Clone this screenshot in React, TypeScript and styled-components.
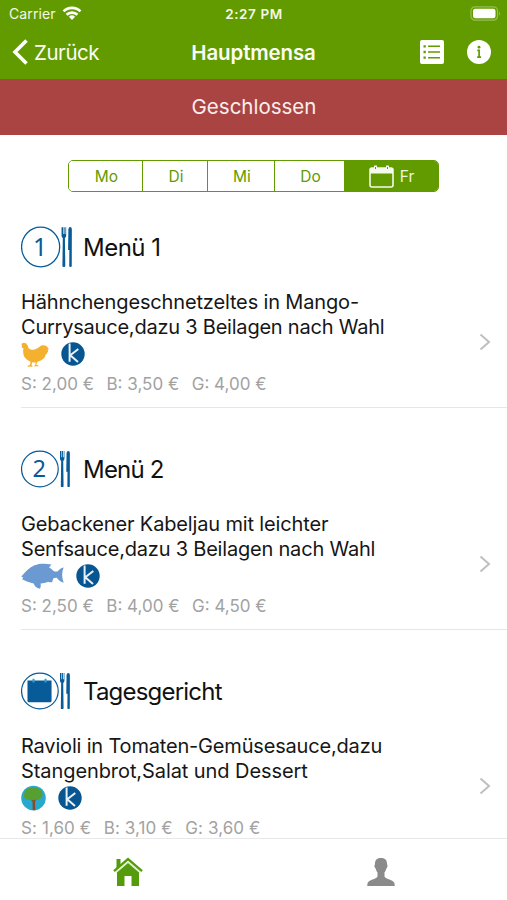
import React from "react";
import styled, { createGlobalStyle } from "styled-components";

const GREEN = "#629b00";
const BLUE = "#075b98";

const GlobalStyle = createGlobalStyle`
  * { box-sizing: border-box; }
  body { margin: 0; background: #fff; font-family: Inter, "Liberation Sans", sans-serif; }
`;

const Screen = styled.div`
  width: 507px;
  height: 900px;
  display: flex;
  flex-direction: column;
  overflow: hidden;
  background: #fff;
  color: #161616;
`;

const StatusBar = styled.div`
  height: 26px;
  flex: none;
  display: grid;
  grid-template-columns: 1fr auto 1fr;
  align-items: center;
  padding: 0 6px 0 9px;
  background: ${GREEN};
  color: #f3f8e8;
`;

const Carrier = styled.div`
  display: flex;
  align-items: center;
  gap: 6px;
  font-size: 14px;
  letter-spacing: 0.1px;
`;

const Clock = styled.div`
  margin-right: 2px;
  padding-top: 1px;
  font-size: 13.5px;
  font-weight: 600;
  letter-spacing: 0.6px;
`;

const Battery = styled.div`
  display: flex;
  justify-content: flex-end;
`;

const NavBar = styled.div`
  height: 53px;
  flex: none;
  display: grid;
  grid-template-columns: 1fr auto 1fr;
  align-items: center;
  padding: 0 15px 1px 12px;
  background: ${GREEN};
  color: #fbfdf5;
`;

const Back = styled.div`
  display: flex;
  align-items: center;
  gap: 6px;
  font-size: 20.5px;
  letter-spacing: -0.45px;
`;

const NavTitle = styled.div`
  font-size: 20.5px;
  font-weight: 600;
  letter-spacing: -0.15px;
  padding-top: 1px;
  margin-left: 3px;
`;

const NavActions = styled.div`
  display: flex;
  justify-content: flex-end;
  gap: 21px;
`;

const Banner = styled.div`
  height: 56px;
  flex: none;
  display: flex;
  align-items: center;
  justify-content: center;
  padding: 0 0 2px 1px;
  background: #a94442;
  color: #faeeee;
  font-size: 20.5px;
`;

const DayPicker = styled.div`
  height: 32px;
  flex: none;
  display: grid;
  grid-template-columns: 73px 65px 67px 70px 94px;
  margin: 25px 68px 20px;
  border: 1px solid ${GREEN};
  border-radius: 5px;
  overflow: hidden;
`;

const Day = styled.div<{ $active?: boolean }>`
  display: flex;
  align-items: center;
  justify-content: center;
  gap: 6px;
  font-size: 15.5px;
  padding-left: ${(p) => (p.$active ? 0 : 2)}px;
  border-left: 1px solid ${GREEN};
  color: ${(p) => (p.$active ? "#eef6df" : GREEN)};
  background: ${(p) => (p.$active ? GREEN : "#fff")};
  &:first-child { border-left: 0; }
`;

const List = styled.div`
  flex: 1;
  min-height: 0;
  overflow: hidden;
  display: flex;
  flex-direction: column;
  gap: 26px;
`;

const Section = styled.section`
  flex: none;
  height: 196px;
  padding-left: 21px;
`;

const SectionTitle = styled.div<{ $spacing: number }>`
  height: 70px;
  display: flex;
  align-items: center;
  gap: 10px;
  font-size: 24px;
  letter-spacing: ${(p) => p.$spacing}px;
  color: #111;
`;

const IconSlot = styled.div`
  width: 52px;
  height: 42px;
  display: flex;
  align-items: center;
`;

const Dish = styled.div`
  height: 126px;
  display: flex;
  align-items: center;
  justify-content: space-between;
  padding: 0 16px 0 0;
  border-bottom: 1px solid #e6e6e6;
`;

const DishBody = styled.div`
  height: 100%;
  padding-top: 8px;
`;

const DishText = styled.div<{ $spacing: number }>`
  font-size: 20px;
  line-height: 24.5px;
  letter-spacing: ${(p) => p.$spacing}px;
  white-space: nowrap;
`;

const Tags = styled.div<{ $gap: number }>`
  display: flex;
  align-items: center;
  gap: ${(p) => p.$gap}px;
  height: 30px;
`;

const Prices = styled.div<{ $spacing: number }>`
  display: flex;
  gap: 12.5px;
  margin-top: 4px;
  font-size: 17px;
  letter-spacing: ${(p) => p.$spacing}px;
  line-height: 23px;
  color: #a2a2a2;
`;

const Disclosure = styled.div`
  display: flex;
  padding-bottom: 6px;
`;

const TabBar = styled.div`
  height: 62px;
  flex: none;
  display: grid;
  grid-template-columns: 1fr 1fr;
  align-items: center;
  justify-items: center;
  padding: 4px 0 0 2px;
  border-top: 1px solid #e8e8e8;
  background: #fff;
`;

const Wifi = () => (
  <svg width="20" height="15" viewBox="0 0 20 15" fill="none" stroke="#fff" strokeWidth="2.7">
    <path d="M1.5 5.4a12 12 0 0 1 17 0M4.6 8.8a7.7 7.7 0 0 1 10.8 0" />
    <path d="M10 14l-3.1-3.2a4.5 4.5 0 0 1 6.2 0z" fill="#fff" stroke="none" />
  </svg>
);

const BatteryIcon = () => (
  <svg width="31" height="15" viewBox="0 0 31 15">
    <rect x="1" y=".8" width="26.5" height="13.4" rx="4" fill="none" stroke="#95bd55" strokeWidth="1.2" />
    <rect x="3" y="2.8" width="22.5" height="9.4" rx="2.2" fill="#fff" />
    <path d="M29 5.2q2 2.3 0 4.6z" fill="#95bd55" />
  </svg>
);

const Plate = ({ kind, width, size }: { kind: string; width: number; size: number }) => (
  <svg width={width} height={size} viewBox="0 0 54 42" preserveAspectRatio="none" style={undefined}>
    <circle cx="20.4" cy="21" r="19.8" fill="none" stroke={BLUE} strokeWidth="1.3" />
    {kind === "day" ? (
      <>
        <path d="M7 9.500h26v22.500a1.500 1.500 0 0 1-1.500 1.500h-23A1.500 1.500 0 0 1 7 32z" fill={BLUE} />
        <path d="M13.500 7.500v4M26.500 7.500v4" stroke="#2ba3cf" strokeWidth="2.200" />
      </>
    ) : (
      <text x="19.7" y="30" textAnchor="middle" fontFamily="Noto Sans, sans-serif" fontSize="25.500" letterSpacing="0" fill={BLUE}>
        {kind}
      </text>
    )}
    <path d="M42.1 1.2v8.200c0 1.300.5 2 1.300 2.500L43 40q0 1 1.500 1t1.500-1l-.4-28.100c.8-.5 1.300-1.200 1.300-2.500V1.200h-.8V8h-.8V1.200h-1V8h-.6V1.200z" fill={BLUE} />
    <path d="M49.200 3.200q.3-2.200 1.900-2.200t1.700 2.200l-.1 36.800q0 1-1.300 1t-1.300-1l.1-16h-1.300z" fill={BLUE} />
  </svg>
);

const Chicken = () => (
  <svg width="29" height="25" viewBox="0 0 29 25">
    <path
      fill="#f4b02f"
      d="M.4 2.500 1.500 1 3.400.8l1 .7.8-.4.5 1.500.9.700.8 2.600c1.200 1.500 3.600 2.200 6.200 1.600 2.800-.8 4.600-2.200 5.800-3.400C22 2.300 26.600 3.300 28 7.600l-1.300-.2.4 2.700-1 .3-.4 1.700-1 .3c-.6 3.600-3.700 5.500-6.300 6.700l-1.800.7-1.500 2.800 2.400 1-.2.700h-2.500l-1.300.4-.1-.9.900-.6.3-2.900-2 .1-1.300-.2-.9 2.900 1.200 1-.5.800-1.700-.5-2.700.3-.2-.9 2.400-.7.700-3.400C6.200 18.200 3.600 16.200 2.600 13.200L2.100 9l.3-2.700L.5 5.400 1 4z"
    />
  </svg>
);

const Fish = () => (
  <svg width="43" height="26" viewBox="0 0 43 26">
    <path
      fill="#6b9ad2"
      d="M.3 13.600C4.600 8.500 8.500 4.400 13.500 2.300 18.800.2 24.200.4 30.500 1.400L28 4.600c2.100 1 3.400 2.700 5.500 3.800h3c1.700-1.500 3.300-3.300 6.100-3.800-2 5-1.900 9.800.1 15.100-2.800-.6-5-2.300-7-4.900-1.500-.3-2.300.1-3.500.8l-1 3.400c-1.500.3-2.500.3-4.100-.3-2.500 1-4.900 1.500-7.500 1.700.3 2.200.2 4-.8 5.300-3.200-.4-5.100-2.300-6.100-5.200C7.600 19.500 3.700 17.600 1 16.300l1.400-1.500z"
    />
  </svg>
);

const Tree = () => (
  <svg width="26" height="26" viewBox="0 0 26 26">
    <circle cx="12.500" cy="13" r="12.300" fill="#27a9ce" />
    <path d="m11.800 15-3.300-1.500 3 3.100.2 8.700h2.600l-.4-9 4-4-4.300 2z" fill="#8a4a26" />
    <path d="M3 10.500C3 5 7.500 2.200 12 2.500c5.500-.3 9.800 3.100 9.600 7.500-.1 3-2.600 4.600-5.600 4.500-2.500.9-4.800.7-6.300.2C6 15 3 13.800 3 10.500z" fill="#589f31" />
  </svg>
);

const Badge = () => (
  <svg width="24" height="24" viewBox="0 0 24 24">
    <circle cx="12" cy="12" r="11.700" fill="#075591" />
    <path d="M8.600 1.500v18.200M17.300 7 9.300 13.300 17 20" fill="none" stroke="#e7f1f8" strokeWidth="2" />
  </svg>
);

const Chevron = () => (
  <svg width="12" height="18" viewBox="0 0 12 18" fill="none" stroke="#bfbfbf" strokeWidth="2">
    <path d="M1.500 1.500 10 9l-8.500 7.500" />
  </svg>
);

const dishes = [
  {
    kind: "1", title: "Menü 1", titleSpacing: -0.5, plate: [55, 42],
    lines: [{ text: "Hähnchengeschnetzeltes in Mango-", spacing: -0.15 }, { text: "Currysauce,dazu 3 Beilagen nach Wahl", spacing: -0.22 }],
    icon: <Chicken />, gap: 11, prices: ["S: 2,00 €", "B: 3,50 €", "G: 4,00 €"], priceSpacing: 0,
  },
  {
    kind: "2", title: "Menü 2", titleSpacing: -0.8, plate: [50, 38],
    lines: [{ text: "Gebackener Kabeljau mit leichter", spacing: -0.15 }, { text: "Senfsauce,dazu 3 Beilagen nach Wahl", spacing: -0.2 }],
    icon: <Fish />, gap: 12, prices: ["S: 2,50 €", "B: 4,00 €", "G: 4,50 €"], priceSpacing: 0,
  },
  {
    kind: "day", title: "Tagesgericht", titleSpacing: -0.8, plate: [50, 38],
    lines: [{ text: "Ravioli in Tomaten-Gemüsesauce,dazu", spacing: -0.18 }, { text: "Stangenbrot,Salat und Dessert", spacing: -0.08 }],
    icon: <Tree />, gap: 11, prices: ["S: 1,60 €", "B: 3,10 €", "G: 3,60 €"], priceSpacing: 0.1,
  },
];

export default function App() {
  return (
    <>
      <GlobalStyle />
      <Screen>
        <StatusBar>
          <Carrier>Carrier <Wifi /></Carrier>
          <Clock>2:27 PM</Clock>
          <Battery><BatteryIcon /></Battery>
        </StatusBar>
        <NavBar>
          <Back>
            <svg width="16" height="26" viewBox="0 0 16 26" fill="none" stroke="#fff" strokeWidth="3.600">
              <path d="M14.500 1.500 3 13l11.500 11.500" />
            </svg>
            Zurück
          </Back>
          <NavTitle>Hauptmensa</NavTitle>
          <NavActions>
            <svg width="26" height="26" viewBox="0 0 26 26">
              <rect x="1" y="1" width="24" height="24" rx="2" fill="#fff" />
              <path d="M9 7.300h12M9 13h12M9 18.700h12" stroke={GREEN} strokeWidth="1.500" />
              <path d="M4.500 7.300h2.300M4.500 13h2.300M4.500 18.700h2.300" stroke={GREEN} strokeWidth="2.300" />
            </svg>
            <svg width="26" height="26" viewBox="0 0 26 26">
              <circle cx="13" cy="13" r="12" fill="#fff" />
              <circle cx="13" cy="8.200" r="1.400" fill={GREEN} />
              <path d="M11.300 11.300h1.800v6.400M11.200 18.100h3.900" stroke={GREEN} strokeWidth="1.700" fill="none" />
            </svg>
          </NavActions>
        </NavBar>
        <Banner>Geschlossen</Banner>
        <DayPicker>
          <Day>Mo</Day>
          <Day>Di</Day>
          <Day>Mi</Day>
          <Day>Do</Day>
          <Day $active>
            <svg width="25" height="23" viewBox="0 0 25 23">
              <rect x="1" y="3" width="23" height="19" rx="2" fill="none" stroke="#f5faeb" strokeWidth="1.600" />
              <path d="M1 3h23v5.500H1z" fill="#f5faeb" />
              <path d="M6.500.5v4M18.500.5v4" stroke="#f5faeb" strokeWidth="3" />
              <path d="M6.500 2v2M18.500 2v2" stroke={GREEN} strokeWidth="1" />
            </svg>
            Fr
          </Day>
        </DayPicker>
        <List>
          {dishes.map((d) => (
            <Section key={d.title}>
              <SectionTitle $spacing={d.titleSpacing}>
                <IconSlot><Plate kind={d.kind} width={d.plate[0]} size={d.plate[1]} /></IconSlot>
                {d.title}
              </SectionTitle>
              <Dish>
                <DishBody>
                  {d.lines.map((l) => <DishText key={l.text} $spacing={l.spacing}>{l.text}</DishText>)}
                  <Tags $gap={d.gap}>{d.icon}<Badge /></Tags>
                  <Prices $spacing={d.priceSpacing}>{d.prices.map((p) => <span key={p}>{p}</span>)}</Prices>
                </DishBody>
                <Disclosure><Chevron /></Disclosure>
              </Dish>
            </Section>
          ))}
        </List>
        <TabBar>
          <svg width="32" height="32" viewBox="0 0 32 32">
            <path d="M4.500 3h4v6l-4 3.500zM16 6.500 27 16v14h-7.500V20h-7v10H5V16z" fill="#559c0c" />
            <path d="m2 15.200 14-12 14 12" fill="none" stroke="#559c0c" strokeWidth="2.400" />
            <path d="M4 16.500 16 6.200l12 10.300" fill="none" stroke="#d8edbd" strokeWidth="1.200" />
          </svg>
          <svg width="28" height="30" viewBox="0 0 28 30">
            <path fill="#8a8a8a" d="M14 1c4.500 0 6.300 2.700 6 6.500.9.200.6 3.300-.7 4-.4 1.900-1 3-1.800 3.800v4.200c1.400 2.800 8.800 3.200 9.900 6.500l.4 3H.2l.4-3c1.100-3.300 8.500-3.700 9.900-6.500v-4.200c-.8-.8-1.400-1.900-1.800-3.800-1.300-.7-1.600-3.800-.7-4C7.700 3.700 9.500 1 14 1z" />
          </svg>
        </TabBar>
      </Screen>
    </>
  );
}
